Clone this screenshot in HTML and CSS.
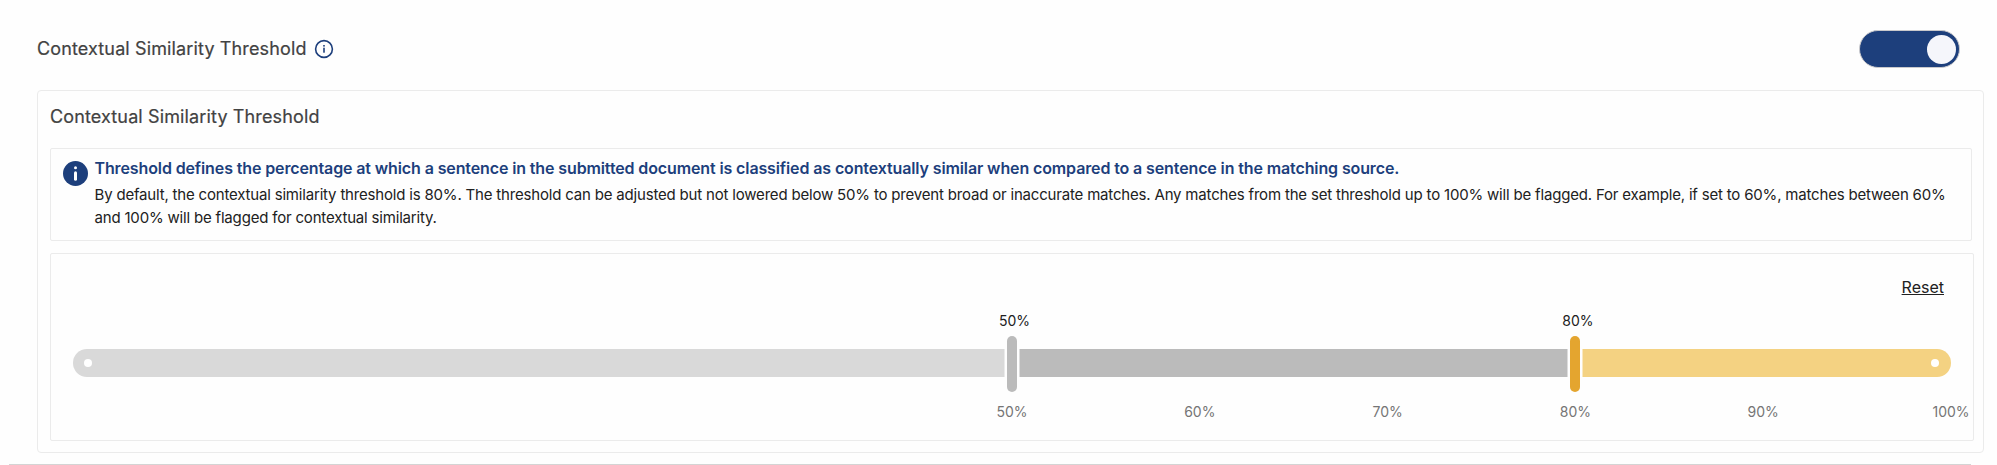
FILE: index.html
```html
<!DOCTYPE html>
<html lang="en">
<head>
<meta charset="utf-8">
<title>Contextual Similarity Threshold</title>
<link rel="stylesheet" href="styles.css">
</head>
<body>
<main class="setting">
  <header class="setting-header">
    <h2 class="heading">Contextual Similarity Threshold</h2>
    <svg class="info-outline" viewBox="0 0 20 20" width="20" height="20">
      <circle cx="10" cy="10" r="8.4" fill="none" stroke="currentColor" stroke-width="1.6"/>
      <rect x="9.2" y="8.7" width="1.6" height="5" fill="currentColor"/>
      <rect x="9.2" y="6" width="1.6" height="1.6" fill="currentColor"/>
    </svg>
    <button class="toggle" type="button" aria-label="Enabled"><span class="toggle-knob"></span></button>
  </header>
  <section class="card">
    <h3 class="heading">Contextual Similarity Threshold</h3>
    <div class="notice">
      <svg class="notice-icon" viewBox="0 0 25 25" width="25" height="25">
        <circle cx="12.5" cy="12.5" r="12.5" fill="currentColor"/>
        <rect x="11" y="10.3" width="3" height="9.5" rx="1.5" fill="#fff"/>
        <circle cx="12.5" cy="6.8" r="1.5" fill="#fff"/>
      </svg>
      <div class="notice-body">
        <p class="notice-title">Threshold defines the percentage at which a sentence in the submitted document is classified as contextually similar when compared to a sentence in the matching source.</p>
        <p class="notice-text">By default, the contextual similarity threshold is 80%. The threshold can be adjusted but not lowered below 50% to prevent broad or inaccurate matches. Any matches from the set threshold up to 100% will be flagged. For example, if set to 60%, matches between 60%<br>and 100% will be flagged for contextual similarity.</p>
      </div>
    </div>
    <div class="slider-box">
      <a class="reset">Reset</a>
      <div class="slider">
        <div class="track">
          <div class="segment segment-locked"><i class="dot"></i></div>
          <div class="segment segment-off"></div>
          <div class="segment segment-on"><i class="dot"></i></div>
        </div>
        <div class="handle" style="left:50%"><span class="handle-value">50%</span></div>
        <div class="handle handle-active" style="left:80%"><span class="handle-value">80%</span></div>
        <span class="tick" style="left:50%">50%</span>
        <span class="tick" style="left:60%">60%</span>
        <span class="tick" style="left:70%">70%</span>
        <span class="tick" style="left:80%">80%</span>
        <span class="tick" style="left:90%">90%</span>
        <span class="tick" style="left:100%">100%</span>
      </div>
    </div>
  </section>
  <hr class="divider">
</main>
</body>
</html>
```
FILE: styles.css
```css
* { box-sizing: border-box; margin: 0; padding: 0; }
html { height: 465px; overflow: hidden; }
body {
  width: 1997px;
  height: 465px;
  overflow: hidden;
  background: #fefefe;
  color: #212121;
  font-family: Inter, "Liberation Sans", sans-serif;
}
.setting { padding: 30px 13px 0 9px; }
.setting-header {
  display: flex;
  align-items: center;
  height: 38px;
  margin: 0 24px 22px 28px;
}
.heading {
  font-size: 18px;
  font-weight: 400;
  line-height: 24px;
  letter-spacing: 0.13px;
  color: #424242;
  -webkit-text-stroke: 0.2px #424242;
  white-space: nowrap;
}
.info-outline { margin-left: 7px; color: #1d3f7c; }
.toggle {
  display: flex;
  align-items: center;
  justify-content: flex-end;
  width: 101px;
  height: 38px;
  margin-left: auto;
  padding-right: 3px;
  border: 1px solid #c9c9cc;
  border-radius: 19px;
  background: #1d3f7c;
}
.toggle-knob { width: 29px; height: 29px; border-radius: 50%; background: #f5f6fb; }
.card {
  height: 363px;
  margin-left: 28px;
  padding: 14px 9px 0 12px;
  border: 1px solid #ebebeb;
  border-radius: 4px;
}
.notice {
  display: flex;
  height: 93px;
  margin: 19px 2px 12px 0;
  padding: 8px 0 0 12px;
  border: 1px solid #ebebeb;
  border-radius: 2px;
}
.notice-icon { flex: none; margin-top: 4px; color: #1d3f7c; }
.notice-body { margin-left: 6.5px; white-space: nowrap; }
.notice-title { font-size: 16px; font-weight: 600; line-height: 22px; letter-spacing: -0.12px; color: #1d3f7c; }
.notice-text { margin-top: 4px; font-size: 15px; line-height: 23px; letter-spacing: -0.185px; }
.slider-box {
  height: 188px;
  padding: 23px 22px 0;
  border: 1px solid #ebebeb;
  border-radius: 2px;
}
.reset {
  display: block;
  width: max-content;
  margin: 0 7px 0 auto;
  font-size: 16px;
  line-height: 20px;
  text-decoration: underline;
}
.slider { position: relative; height: 28px; margin-top: 52px; }
.track { display: flex; height: 28px; border-radius: 14px; overflow: hidden; }
.segment { display: flex; align-items: center; }
.segment-locked { width: 50%; padding-left: 11px; background: #d9d9d9; }
.segment-off { width: 30%; background: #bbb; }
.segment-on { width: 20%; padding-right: 12px; justify-content: flex-end; background: #f4d282; }
.dot { width: 8px; height: 8px; border-radius: 50%; background: #fff; }
.handle {
  position: absolute;
  top: -13px;
  width: 10px;
  height: 56px;
  margin-left: -5px;
  border-radius: 5px;
  background: #bbb;
  box-shadow: 0 0 0 2.5px #fefefe;
}
.handle-active { background: #e4a52f; }
.handle-value, .tick {
  position: absolute;
  font-size: 14px;
  line-height: 18px;
  white-space: nowrap;
  transform: translateX(-50%);
}
.handle-value { top: -24px; left: 7.5px; }
.tick { top: 54px; color: #757575; }
.divider { width: 1962px; margin-top: 11px; border: 0; border-top: 1px solid #d4d4d4; }
```
